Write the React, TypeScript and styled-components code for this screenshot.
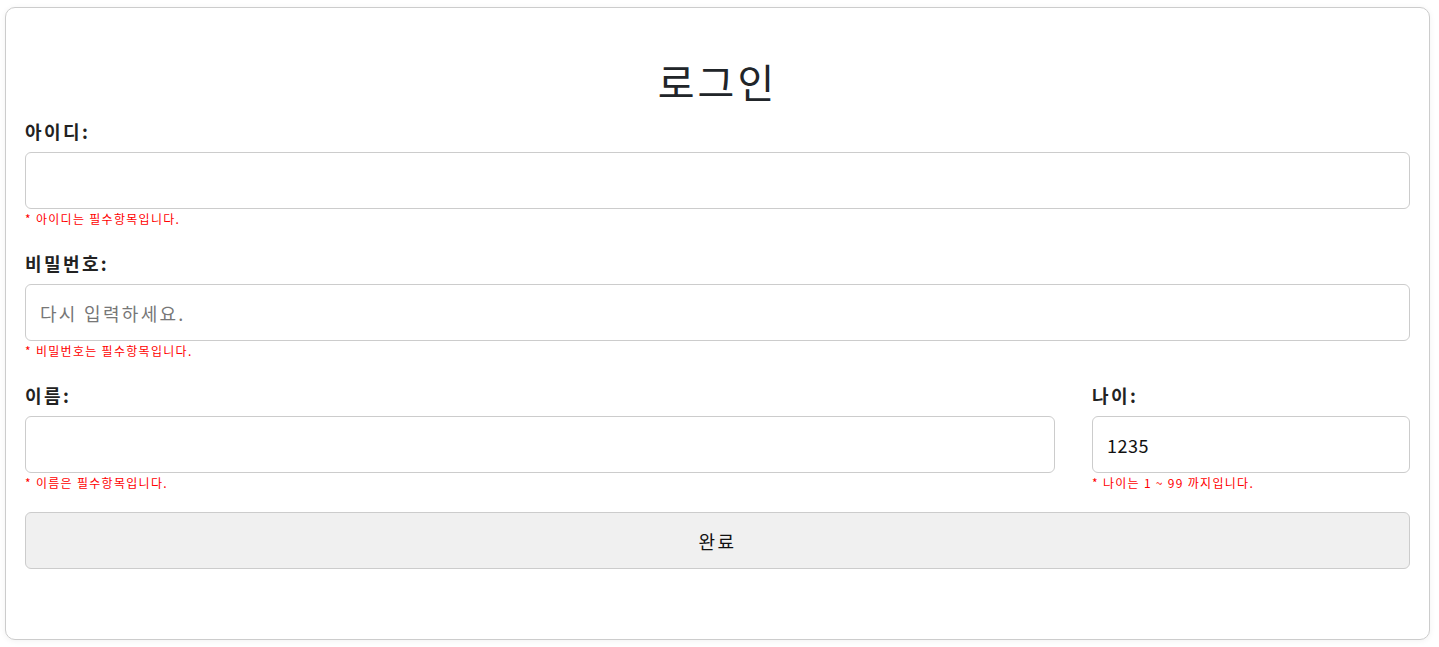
import React from 'react';
import styled, { createGlobalStyle } from 'styled-components';

const GlobalStyle = createGlobalStyle`
  * {
    box-sizing: border-box;
  }
  body {
    margin: 0;
    background: #ffffff;
    font-family: "Noto Sans CJK KR", "Noto Sans", sans-serif;
  }
`;

const Page = styled.div`
  padding: 7px 9px 7px 5px;
`;

const Card = styled.div`
  border: 1px solid #cccccc;
  border-radius: 10px;
  background: #ffffff;
  box-shadow: 0 1px 6px rgba(0, 0, 0, 0.06);
  padding: 48px 19px 70px 19px;
`;

const Title = styled.h1`
  margin: 0 0 13px;
  font-size: 40px;
  line-height: 50px;
  font-weight: 400;
  letter-spacing: 3px;
  text-align: center;
  color: #212529;
`;

const Form = styled.form`
  display: flex;
  flex-direction: column;
`;

const Field = styled.div<{ $spacing?: number }>`
  display: flex;
  flex-direction: column;
  margin-bottom: ${(p) => p.$spacing ?? 24}px;
`;

const Row = styled.div`
  display: grid;
  grid-template-columns: 1fr 318px;
  column-gap: 37px;
`;

const Label = styled.label`
  font-size: 18px;
  line-height: 24px;
  font-weight: 700;
  letter-spacing: 2.4px;
  color: #222222;
  margin-bottom: 9px;
`;

const Input = styled.input`
  height: 57px;
  width: 100%;
  border: 1px solid #cccccc;
  border-radius: 6px;
  padding: 0 14px;
  font-family: inherit;
  font-size: 18px;
  letter-spacing: 0.5px;
  color: #111111;
  background: #ffffff;
  outline: none;

  &::placeholder {
    color: #777777;
    letter-spacing: 2.3px;
  }
`;

const ErrorText = styled.span`
  margin-top: 2px;
  font-size: 12px;
  line-height: 16px;
  letter-spacing: 1.3px;
  color: #ff0000;
`;

const SubmitButton = styled.button`
  height: 57px;
  width: 100%;
  border: 1px solid #cccccc;
  border-radius: 6px;
  background: #f0f0f0;
  font-family: inherit;
  font-size: 18px;
  letter-spacing: 2.5px;
  color: #111111;
  cursor: pointer;
`;

const App: React.FC = () => {
  return (
    <Page>
      <GlobalStyle />
      <Card>
        <Title>로그인</Title>
        <Form onSubmit={(e) => e.preventDefault()}>
          <Field>
            <Label htmlFor="userId">아이디:</Label>
            <Input id="userId" type="text" />
            <ErrorText>* 아이디는 필수항목입니다.</ErrorText>
          </Field>

          <Field>
            <Label htmlFor="password">비밀번호:</Label>
            <Input id="password" type="password" placeholder="다시 입력하세요." />
            <ErrorText>* 비밀번호는 필수항목입니다.</ErrorText>
          </Field>

          <Row>
            <Field $spacing={21}>
              <Label htmlFor="name">이름:</Label>
              <Input id="name" type="text" />
              <ErrorText>* 이름은 필수항목입니다.</ErrorText>
            </Field>
            <Field $spacing={21}>
              <Label htmlFor="age">나이:</Label>
              <Input id="age" type="text" defaultValue="1235" />
              <ErrorText>* 나이는 1 ~ 99 까지입니다.</ErrorText>
            </Field>
          </Row>

          <SubmitButton type="submit">완료</SubmitButton>
        </Form>
      </Card>
    </Page>
  );
};

export default App;
